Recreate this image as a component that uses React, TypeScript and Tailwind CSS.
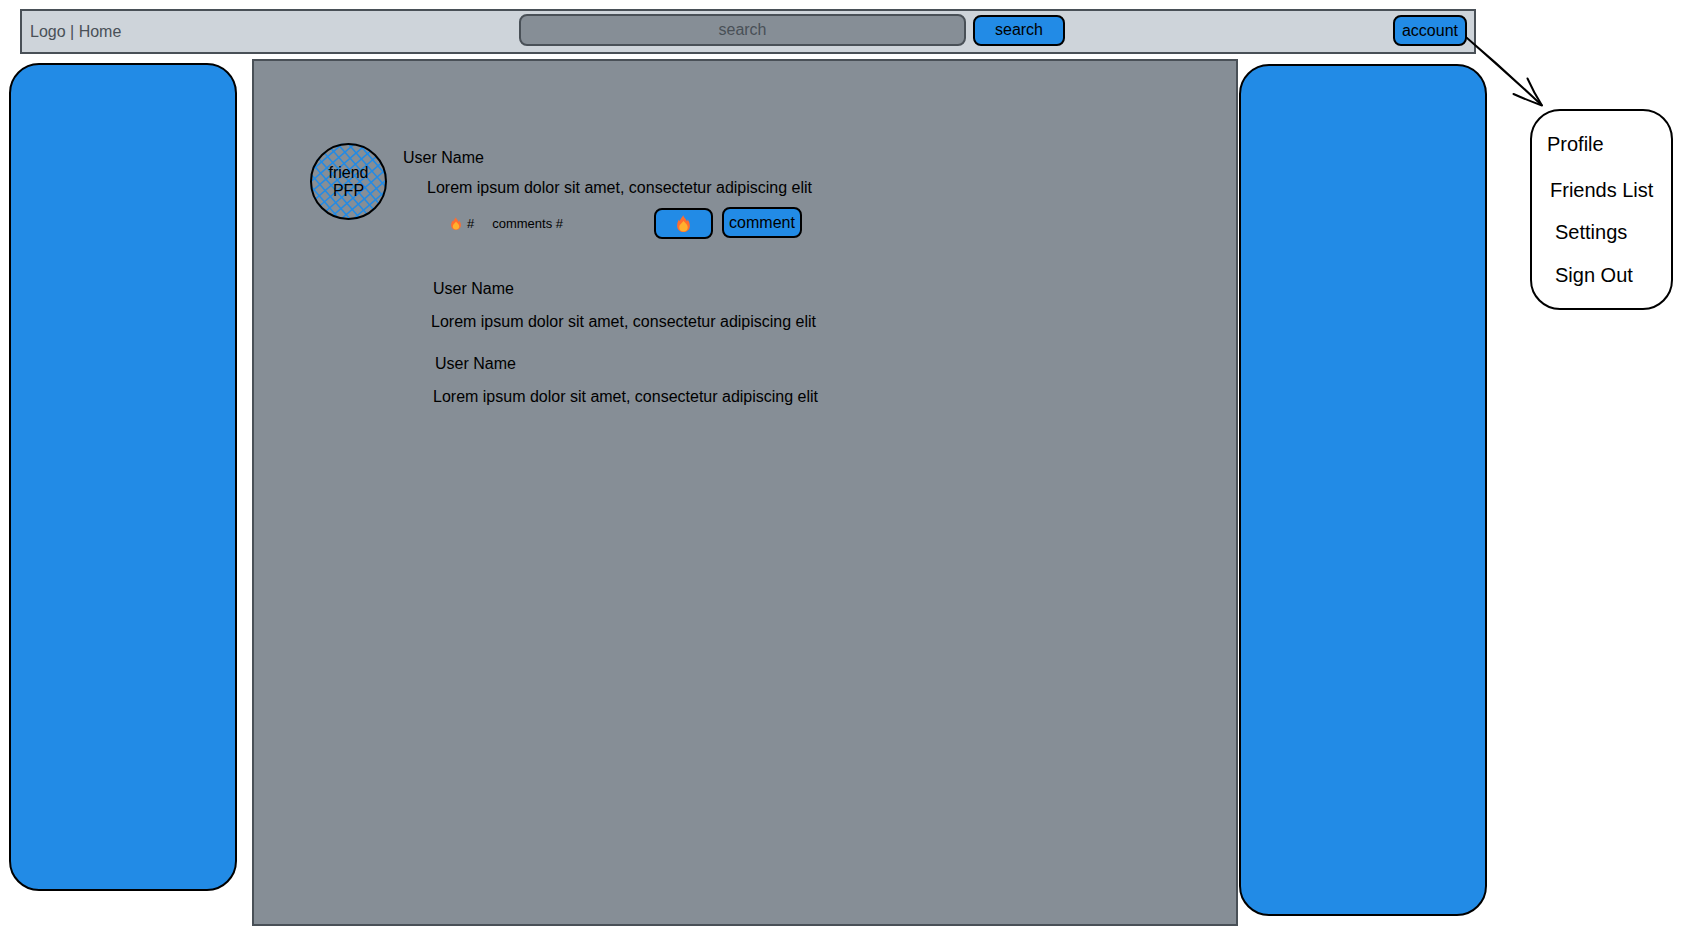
import React from "react";

const LOREM = "Lorem ipsum dolor sit amet, consectetur adipiscing elit";

const BUTTON =
  "flex items-center justify-center rounded-lg border-2 border-black bg-[#228be6] text-base leading-5 text-black";

const HATCH = Array.from({ length: 11 }, (_, i) => i * 8 - 2);

function Flame({ className }: { className: string }) {
  return (
    <svg viewBox="0 0 24 32" className={className} aria-hidden="true">
      <path
        d="M11.5 0.5C12.5 5 17 7.500 18.500 12C19.500 11 19.800 9.500 19.500 8C22.500 12 24 16 24 20.500C24 27 18.800 32 12 32C5.200 32 0 27 0 20.500C0 15.500 1.500 11.500 3.500 8.500C3.700 10 4.200 11 5 11.500C6 7 9.500 4.500 11.500 0.500Z"
        fill="#ff6d2e"
      />
      <path
        d="M12 11C13.500 14.500 20 17 20 23.500C20 28 16.500 31 12 31C7.500 31 4 28 4 23.500C4 17.500 10 15.500 12 11Z"
        fill="#ffb02e"
      />
    </svg>
  );
}

function Avatar() {
  return (
    <div className="relative flex size-[77px] shrink-0 items-center justify-center">
      <svg viewBox="0 0 77 77" className="absolute inset-0 size-full" aria-hidden="true">
        <defs>
          <clipPath id="avatar-clip">
            <circle cx="38.5" cy="38.5" r="38.5" />
          </clipPath>
        </defs>
        <g clipPath="url(#avatar-clip)" stroke="#228be6" strokeWidth="1.5">
          <g transform="rotate(49 38.5 38.5)">
            {HATCH.map((y) => (
              <path key={y} d={`M-10 ${y}H90`} />
            ))}
          </g>
          <g transform="rotate(-41 38.5 38.5)">
            {HATCH.map((y) => (
              <path key={y} d={`M-10 ${y}H90`} />
            ))}
          </g>
        </g>
        <circle cx="38.5" cy="38.5" r="37.5" fill="none" stroke="#000" strokeWidth="2" />
      </svg>
      <span className="relative text-center text-base leading-[18px]">
        friend
        <br />
        PFP
      </span>
    </div>
  );
}

function Header() {
  return (
    <header className="mx-[11px] grid h-[45px] grid-cols-[497fr_546fr_409fr] items-start border-2 border-[#495057] bg-[#ced4da]">
      <a href="#home" className="self-center pl-2 pt-px text-base leading-5 text-[#495057]">
        Logo | Home
      </a>
      <form className="flex items-center gap-[7px] pt-[3px]" onSubmit={(e) => e.preventDefault()}>
        <input
          type="text"
          aria-label="search"
          placeholder="search"
          className="h-8 min-w-0 flex-1 rounded-lg border-2 border-[#495057] bg-[#868e96] text-center text-base leading-5 text-[#495057] placeholder:text-[#495057]"
        />
        <button type="submit" className={`${BUTTON} h-[31px] w-[92px]`}>
          search
        </button>
      </form>
      <div className="flex justify-end pr-[7px] pt-1">
        <button type="button" className={`${BUTTON} h-[31px] w-[74px]`}>
          account
        </button>
      </div>
    </header>
  );
}

function Post() {
  return (
    <article className="flex gap-4 pl-14 pt-[82px]">
      <Avatar />
      <div className="pt-[5px] text-base leading-5">
        <h2>User Name</h2>
        <p className="mt-[10px] pl-6">{LOREM}</p>
        <div className="mt-2 flex items-center gap-[9px] pl-12">
          <div className="flex w-[194px] items-center pt-0.5 text-[13px] leading-4">
            <Flame className="mr-[6px] h-[13px] w-[10px]" />
            <span>#</span>
            <span className="ml-[18px]">comments #</span>
          </div>
          <button type="button" aria-label="like" className={`${BUTTON} mt-0.5 h-[31px] w-[59px]`}>
            <Flame className="h-[17px] w-[13px]" />
          </button>
          <button type="button" className={`${BUTTON} h-[31px] w-20`}>
            comment
          </button>
        </div>
        <div className="mt-10 flex flex-col gap-[22px] pl-7">
          <section>
            <h3 className="pl-0.5">User Name</h3>
            <p className="mt-[13px]">{LOREM}</p>
          </section>
          <section className="pl-0.5">
            <h3 className="pl-0.5">User Name</h3>
            <p className="mt-[13px]">{LOREM}</p>
          </section>
        </div>
      </div>
    </article>
  );
}

function AccountMenu() {
  return (
    <nav
      aria-label="account"
      className="relative mt-[100px] flex h-[201px] w-[143px] shrink-0 flex-col rounded-[30px] border-2 border-black pl-[15px] pt-[21px] text-xl leading-6"
    >
      <svg
        viewBox="0 0 80 72"
        className="absolute -left-[67px] -top-[76px] h-[72px] w-20"
        fill="none"
        stroke="#000"
        strokeWidth="2"
        strokeLinecap="round"
        aria-hidden="true"
      >
        <path d="M2 3Q45 41 76.500 70M2 3Q41 36 76.500 70" strokeWidth="1.800" />
        <path d="M62.500 43.500Q69 58 77 70.500M48.500 59Q62 65 77 70.500" />
      </svg>
      <a href="#profile">Profile</a>
      <a href="#friends" className="mt-[22px] pl-[3px]">
        Friends List
      </a>
      <a href="#settings" className="mt-[18px] pl-2">
        Settings
      </a>
      <a href="#signout" className="mt-[19px] pl-2">
        Sign Out
      </a>
    </nav>
  );
}

export default function App() {
  return (
    <div className="flex min-h-screen gap-[43px] bg-white p-[9px] font-['Liberation_Sans',Arial,sans-serif] text-black">
      <div className="flex min-w-0 flex-1 flex-col gap-[5px]">
        <Header />
        <div className="flex flex-1">
          <aside className="mb-[35px] mr-[15px] mt-1 w-[228px] shrink-0 rounded-[30px] border-2 border-black bg-[#228be6]" />
          <main className="min-w-0 flex-1 border-2 border-[#495057] bg-[#868e96]">
            <Post />
          </main>
          <aside className="mb-[10px] ml-px mt-[5px] w-[248px] shrink-0 rounded-[30px] border-2 border-black bg-[#228be6]" />
        </div>
      </div>
      <AccountMenu />
    </div>
  );
}
